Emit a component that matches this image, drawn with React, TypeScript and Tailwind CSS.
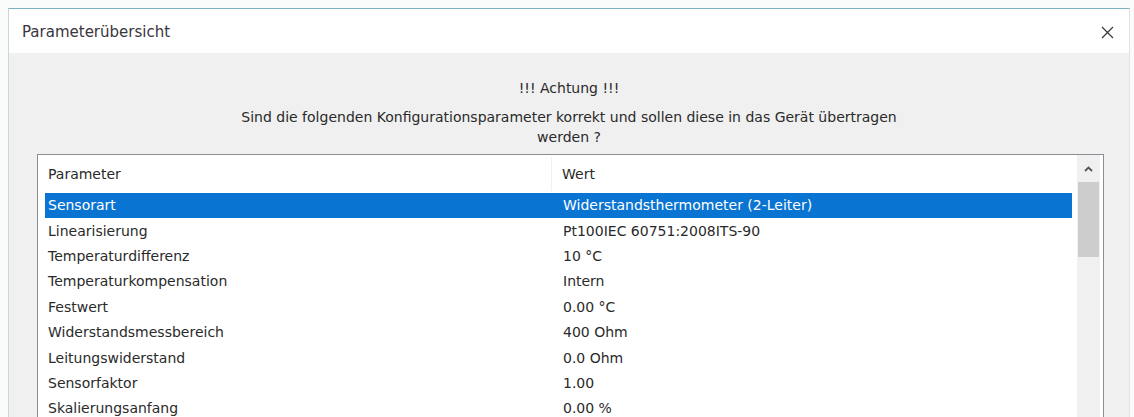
import React from 'react';

interface ParamRow {
  name: string;
  value: string;
}

const rows: ParamRow[] = [
  { name: 'Sensorart', value: 'Widerstandsthermometer (2-Leiter)' },
  { name: 'Linearisierung', value: 'Pt100IEC 60751:2008ITS-90' },
  { name: 'Temperaturdifferenz', value: '10 °C' },
  { name: 'Temperaturkompensation', value: 'Intern' },
  { name: 'Festwert', value: '0.00 °C' },
  { name: 'Widerstandsmessbereich', value: '400 Ohm' },
  { name: 'Leitungswiderstand', value: '0.0 Ohm' },
  { name: 'Sensorfaktor', value: '1.00' },
  { name: 'Skalierungsanfang', value: '0.00 %' },
];

const font = { fontFamily: '"DejaVu Sans", Verdana, sans-serif' };

const App: React.FC = () => {
  const selected = 0;

  return (
    <div className="w-[1134px] h-[417px] overflow-hidden bg-[#fafbfb] pt-[8px] pl-[8px]" style={font}>
      {/* dialog window */}
      <div className="w-[1122px] border-t border-t-[#7ab4be] border-l border-l-[#cfd6d8] border-r border-r-[#e2e4e4] bg-[#f0f0f0] flex flex-col">
        {/* title bar */}
        <div className="h-[44px] shrink-0 bg-white flex items-center justify-between pl-[13px] pr-[15px]">
          <span className="text-[15px] text-[#3a3540] pt-[3px]">Parameterübersicht</span>
          <svg width="13" height="13" viewBox="0 0 13 13" className="mt-[2px]">
            <path d="M1 1 L12 12 M12 1 L1 12" stroke="#3c3c3c" strokeWidth="1.3" fill="none" />
          </svg>
        </div>

        {/* message */}
        <div className="shrink-0 pt-[25px] flex flex-col items-center text-[14px] leading-[20px] text-[#2a2a2a]">
          <p>!!! Achtung !!!</p>
          <p className="mt-[9px] text-center">
            Sind die folgenden Konfigurationsparameter korrekt und sollen diese in das Gerät übertragen
            <br />
            werden ?
          </p>
        </div>

        {/* parameter list */}
        <div className="shrink-0 mt-[7px] ml-[28px] w-[1067px] h-[300px] border border-[#8a8e94] bg-white flex">
          <div className="flex-1 flex flex-col text-[14px] text-[#2a2a2a]">
            <div className="h-[38px] shrink-0 flex items-center">
              <div className="w-[514px] h-[34px] flex items-center pl-[10px] border-r border-r-[#f0f0f0]">Parameter</div>
              <div className="pl-[10px]">Wert</div>
            </div>
            {rows.map((row, i) => (
              <div
                key={row.name}
                className={
                  i === selected
                    ? 'h-[25.4px] shrink-0 ml-[7px] mr-[5px] flex items-center bg-[#0a74d2] text-white'
                    : 'h-[25.4px] shrink-0 ml-[7px] mr-[5px] flex items-center'
                }
              >
                <div className="w-[518px] pl-[3px] whitespace-nowrap">{row.name}</div>
                <div className="flex-1 whitespace-nowrap">{row.value}</div>
              </div>
            ))}
          </div>

          {/* vertical scrollbar */}
          <div className="w-[23px] mr-[3px] bg-[#f0f0f0] flex flex-col items-center">
            <div className="h-[27px] flex items-center justify-center">
              <svg width="9" height="6" viewBox="0 0 9 6">
                <path d="M1 5 L4.5 1.5 L8 5" stroke="#555" strokeWidth="1.8" fill="none" />
              </svg>
            </div>
            <div className="w-[21px] h-[75px] bg-[#cdcdcd]" />
          </div>
        </div>
      </div>
    </div>
  );
};

export default App;
